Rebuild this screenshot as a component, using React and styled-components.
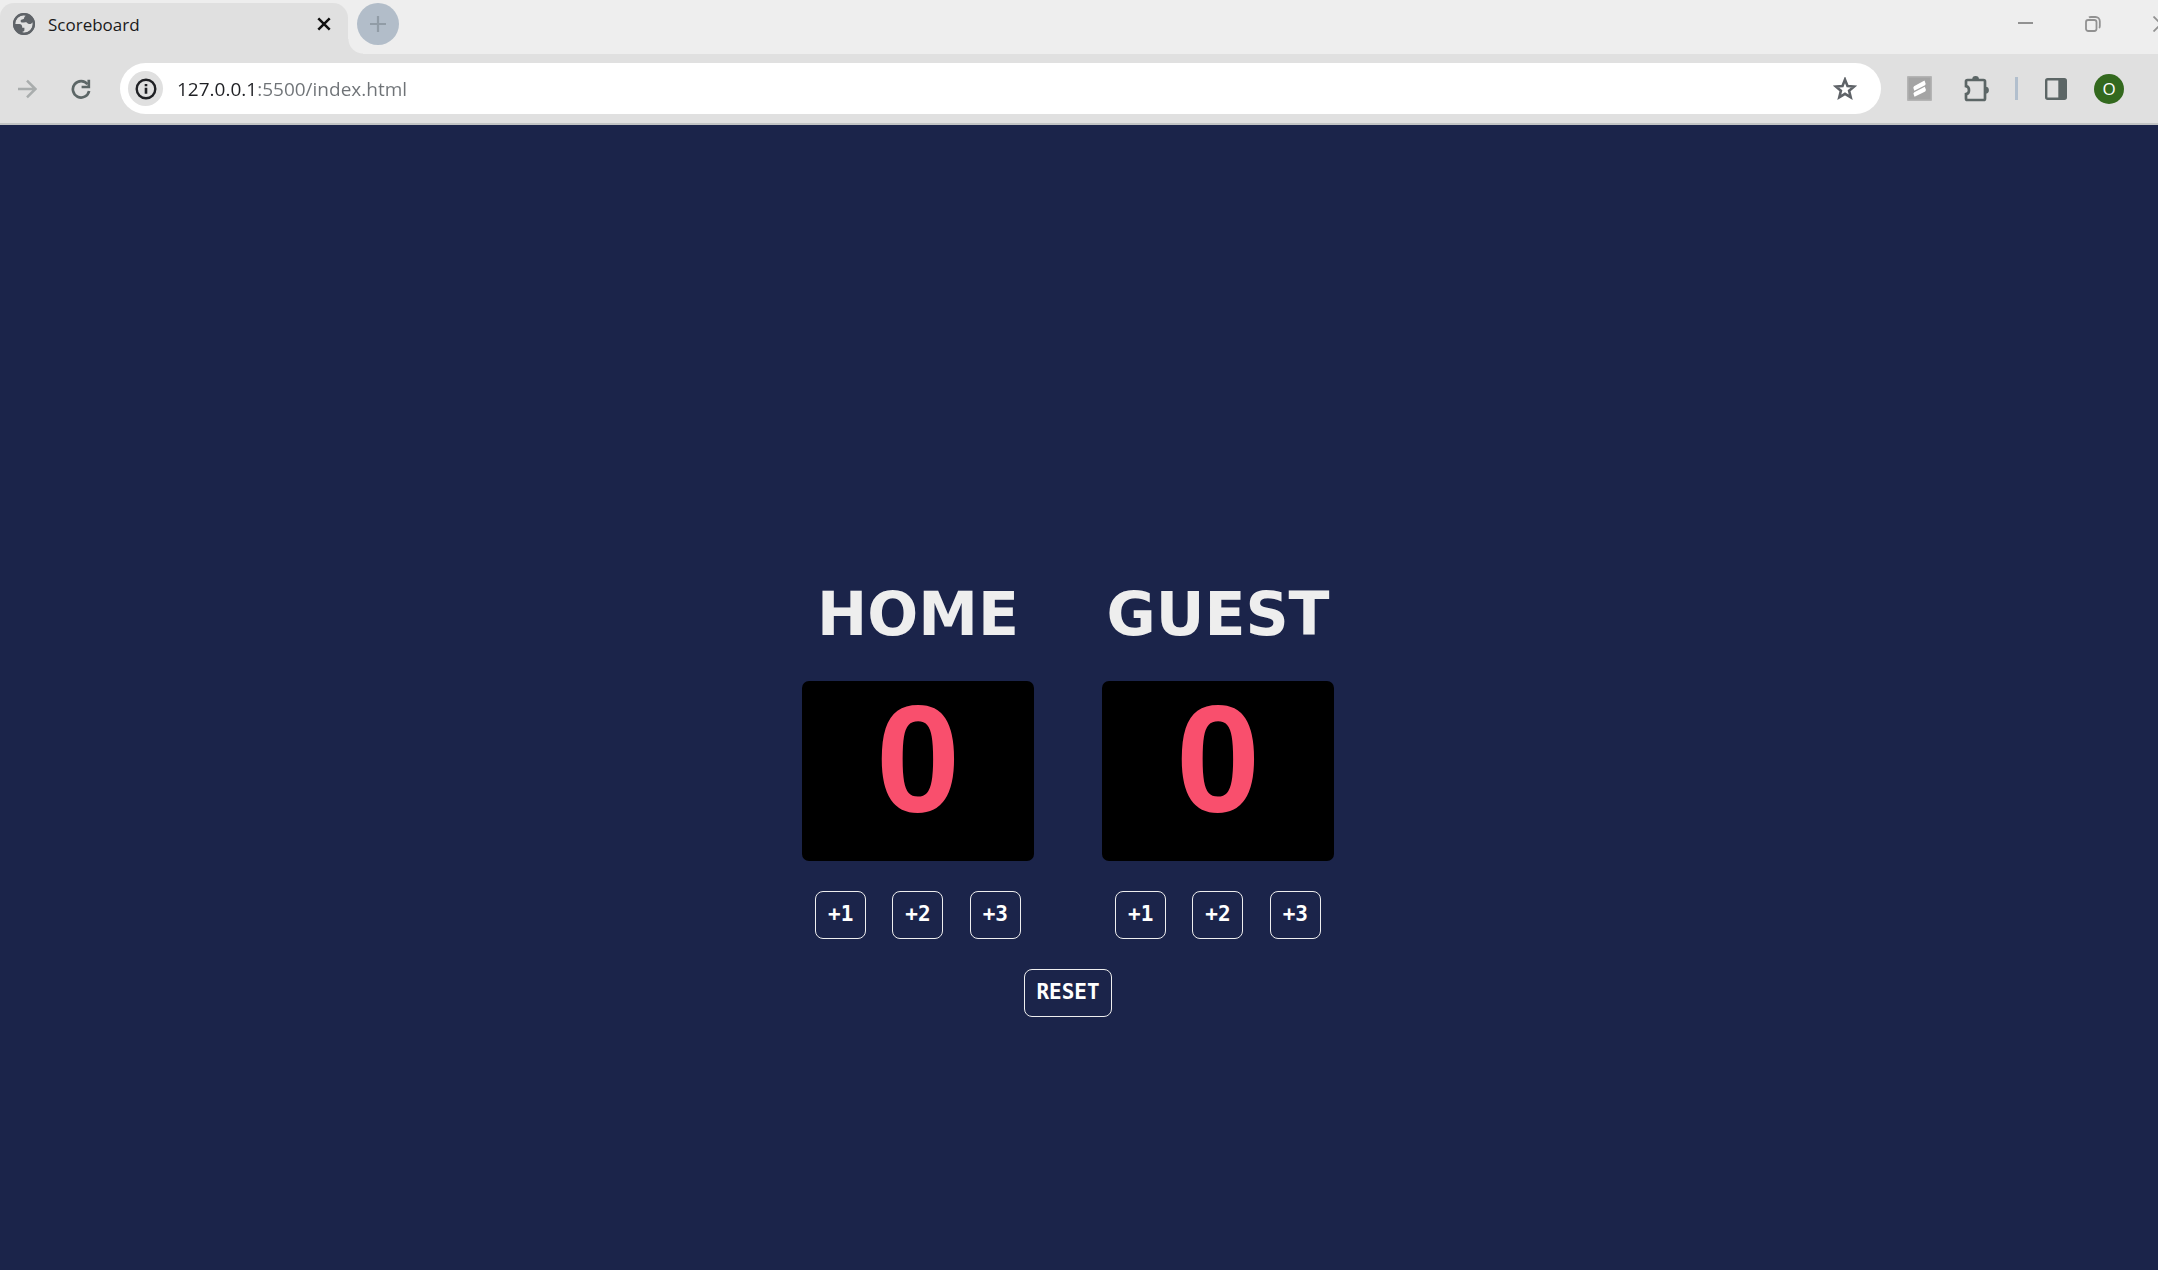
import React, { useState } from "react";
import styled, { createGlobalStyle } from "styled-components";

const GlobalStyle = createGlobalStyle`
  * { box-sizing: border-box; }
  body { margin: 0; overflow-x: hidden; background: #1b244a; }
  button, input { font: inherit; }
`;

const uiFont = `"Open Sans", "Noto Sans", sans-serif`;

const Window = styled.div`
  min-height: 100vh;
  display: flex;
  flex-direction: column;
  font-family: ${uiFont};
`;

const TabStrip = styled.header`
  height: 54px;
  padding-top: 3px;
  display: flex;
  overflow: hidden;
  background: #eeeeee;
`;

const Tab = styled.div`
  width: 348px;
  padding: 0 16px 9px 13px;
  display: flex;
  align-items: center;
  gap: 13px;
  background: #e0e0e0;
  border-radius: 14px 15px 0 0;
`;

const TabTitle = styled.span`
  flex: 1;
  padding-top: 2px;
  font-size: 17px;
  line-height: 24px;
  color: #1a1a1a;
`;

const TabFoot = styled.div`
  align-self: flex-end;
  width: 15px;
  height: 15px;
  margin-right: -6px;
  background: radial-gradient(circle at 100% 0, transparent 14px, #e0e0e0 15px);
`;

const PlainButton = styled.button`
  display: flex;
  align-items: center;
  justify-content: center;
  flex: none;
  width: ${(p) => p.$size}px;
  height: ${(p) => p.$size}px;
  padding: 0;
  border: 0;
  border-radius: 50%;
  background: ${(p) => p.$fill || "transparent"};
  color: ${(p) => p.$ink || "#5c6666"};
  cursor: pointer;
`;

const WindowControls = styled.div`
  margin-left: auto;
  margin-right: -21px;
  height: 42px;
  display: flex;
  align-items: center;
  gap: 32px;
`;

const Toolbar = styled.nav`
  height: 71px;
  padding: 8px 34px 8px 9px;
  display: flex;
  align-items: center;
  gap: 18px;
  background: #e0e0e0;
  border-bottom: 2px solid #c2c4c4;
`;

const AddressBar = styled.div`
  flex: 1;
  height: 51px;
  margin-left: 3px;
  padding: 0 16px 0 8px;
  display: flex;
  align-items: center;
  gap: 14px;
  border-radius: 26px;
  background: #ffffff;
`;

const AddressInput = styled.input`
  flex: 1;
  min-width: 0;
  height: 32px;
  padding: 0;
  border: 0;
  outline: 0;
  font-size: 19px;
  line-height: 32px;
  color: transparent;
  caret-color: #1f2024;
  background: linear-gradient(90deg, #1f2024 81px, #6f7377 81px);
  background-clip: text;
  -webkit-background-clip: text;
`;

const Divider = styled.span`
  width: 3px;
  height: 23px;
  background: #b2bfcd;
`;

const Avatar = styled(PlainButton)`
  font-size: 17px;
  line-height: 30px;
`;

const Page = styled.main`
  flex: 1;
  padding: 447px 22px 0 0;
  display: flex;
  flex-direction: column;
  align-items: center;
  gap: 30px;
  background: #1b244a;
`;

const Teams = styled.div`
  display: flex;
  gap: 68px;
`;

const Team = styled.section`
  width: 232px;
  display: flex;
  flex-direction: column;
  align-items: center;
`;

const TeamName = styled.h1`
  margin: 0 0 25px;
  font-family: "DejaVu Sans", Verdana, sans-serif;
  font-size: 60px;
  font-weight: 700;
  line-height: 84px;
  color: #eeeeee;
`;

const Score = styled.output`
  width: 100%;
  height: 180px;
  margin-bottom: 30px;
  padding-bottom: 24px;
  display: flex;
  align-items: center;
  justify-content: center;
  border-radius: 7px;
  background: #000000;
  font-family: "Liberation Sans", Arial, sans-serif;
  font-size: 152px;
  font-weight: 700;
  line-height: 156px;
  color: #f94f6d;
`;

const Points = styled.div`
  width: 100%;
  display: flex;
  justify-content: space-around;
`;

const LedButton = styled.button`
  width: ${(p) => (p.$wide ? 88 : 51)}px;
  height: 48px;
  padding: 0 0 2px;
  border: 1px solid #eeeeee;
  border-radius: 8px;
  background: transparent;
  font-family: "DejaVu Sans Mono", monospace;
  font-size: 21px;
  font-weight: 700;
  line-height: 24px;
  color: #ffffff;
  cursor: pointer;
`;

const Icon = ({ size = 24, box = 24, children, ...rest }) => (
  <svg width={size} height={size} viewBox={`0 0 ${box} ${box}`} fill="none" stroke="currentColor" aria-hidden="true" {...rest}>
    {children}
  </svg>
);

const GlobeIcon = () => (
  <Icon size={22} box={22} stroke="none">
    <circle cx="11" cy="11" r="11" fill="#5f6368" />
    <path
      fill="#e0e0e0"
      d="M10 2.2C5.500 2.600 2.200 6.500 2.200 11h4.300c1.500 0 2.700 1.200 2.700 2.700v1.100h2.200v2.200c0 1-.9 1.700-1.900 1.700v.9c5.300.8 10.200-3.300 10.300-8.600 0-.7-.1-1.400-.3-2-.8 1.800-1.900 2.300-3.300 2-1.500-.3-1.900-1.500-3.200-1.800-1.500-.3-2.400.5-4.200.2-1-.2-1.500-1.300-1-2.200.5-1 1.900-.7 2.800-1.300.8-.6.300-1.700 1.200-2.500.4-.4.900-.5 1.200-.9A9 9 0 0 0 10 2.200Z"
    />
    <circle cx="11" cy="11" r="9.900" stroke="#5f6368" strokeWidth="2.200" />
  </Icon>
);

const CloseIcon = () => (
  <Icon size={14} box={14} strokeWidth="2.500"><path d="M1.300 1.300l11.400 11.400M12.700 1.300l-11.400 11.400" /></Icon>
);

const PlusIcon = () => (
  <Icon size={16} box={16} strokeWidth="2.200"><path d="M8 0v16M0 8h16" /></Icon>
);

const MinimizeIcon = () => (
  <Icon size={16} box={16} strokeWidth="2"><path d="M1 7h15" /></Icon>
);

const RestoreIcon = () => (
  <Icon size={16} box={16} strokeWidth="1.800">
    <rect x="1" y="4" width="10.500" height="11" rx="2.200" />
    <path d="M4 1.500C4.600 1 5.200 1 6 1h4.500a4.300 4.300 0 0 1 4.300 4.300V10c0 .9-.2 1.500-.7 2" />
  </Icon>
);

const WindowCloseIcon = () => (
  <Icon size={16} box={16} strokeWidth="1.800"><path d="M.5.5l15 15M15.500.5l-15 15" /></Icon>
);

const ForwardIcon = () => (
  <Icon size={20} box={20} strokeWidth="2.500"><path d="M1 10h17M10 1.600l8.400 8.400-8.400 8.400" /></Icon>
);

const ReloadIcon = () => (
  <Icon size={20} box={20}>
    <path d="M16.600 5.300A8.200 8.200 0 1 0 18.100 12" strokeWidth="2.700" />
    <path d="M17.800.8v7.200h-7.200" strokeWidth="2.700" />
  </Icon>
);

const InfoIcon = () => (
  <Icon size={22} box={22}>
    <circle cx="11" cy="11" r="9.300" strokeWidth="2.400" />
    <path d="M11 9.800v6M11 6v2.300" strokeWidth="2.600" />
  </Icon>
);

const StarIcon = () => (
  <Icon size={24} box={24} strokeWidth="2.600">
    <path d="M12 2.600l2.500 6.400 6.700.5-5.100 4.300 1.600 6.500-5.700-3.500-5.700 3.500 1.600-6.500-5.100-4.300 6.700-.5z" />
  </Icon>
);

const ScribbleIcon = () => (
  <Icon size={25} box={25} stroke="none">
    <rect width="25" height="25" rx="1" fill="#b5b5b5" />
    <rect x="1.500" y="1.500" width="22" height="22" fill="#a4a4a4" />
    <path fill="#ffffff" d="M7 10.200L17.500 4.500l1.200 3.500-.7 1.300L7.300 14.700l-1-2.900zM7.300 16.300l10.500-5.600 1.200 3.200-.8 1.500L7.500 20.800l-1.100-3.200z" />
  </Icon>
);

const PuzzleIcon = () => (
  <Icon size={26} box={26}>
    <path
      d="M3.500 4.500H19.500a1.500 1.500 0 0 1 1.500 1.500v17a1.500 1.500 0 0 1-1.500 1.500H3.500a1.500 1.500 0 0 1-1.500-1.500v-4.300c4-.7 4-7.300 0-8V6a1.500 1.500 0 0 1 1.500-1.500Z"
      strokeWidth="2.700"
      transform="translate(0 -.5)"
    />
    <path d="M8.200 3.500a3.400 3.400 0 0 1 6.800 0zM21.500 10.800a3.400 3.400 0 0 1 0 6.800z" fill="currentColor" stroke="none" />
  </Icon>
);

const PanelIcon = () => (
  <Icon size={22} box={22}>
    <rect x="1.200" y="1.200" width="19.600" height="19.600" rx="1.500" strokeWidth="2.400" />
    <path d="M13.300 1h7.700v20h-7.700z" fill="currentColor" stroke="none" />
  </Icon>
);

function TeamPanel({ name, score, onAdd }) {
  return (
    <Team>
      <TeamName>{name}</TeamName>
      <Score aria-label={`${name} score`}>{score}</Score>
      <Points>
        {[1, 2, 3].map((n) => (
          <LedButton key={n} type="button" onClick={() => onAdd(n)}>+{n}</LedButton>
        ))}
      </Points>
    </Team>
  );
}

export default function App() {
  const [home, setHome] = useState(0);
  const [guest, setGuest] = useState(0);
  const reset = () => {
    setHome(0);
    setGuest(0);
  };

  return (
    <>
      <GlobalStyle />
      <Window>
        <TabStrip>
          <Tab>
            <GlobeIcon />
            <TabTitle>Scoreboard</TabTitle>
            <PlainButton $size={16} $ink="#111111" aria-label="Close tab"><CloseIcon /></PlainButton>
          </Tab>
          <TabFoot />
          <PlainButton $size={42} $fill="#b2bdc9" $ink="#919ca6" aria-label="New tab"><PlusIcon /></PlainButton>
          <WindowControls>
            <PlainButton $size={36} $ink="#919191" aria-label="Minimize"><MinimizeIcon /></PlainButton>
            <PlainButton $size={36} $ink="#919191" aria-label="Restore"><RestoreIcon /></PlainButton>
            <PlainButton $size={36} $ink="#919191" aria-label="Close window"><WindowCloseIcon /></PlainButton>
          </WindowControls>
        </TabStrip>
        <Toolbar>
          <PlainButton $size={36} $ink="#a9adad" aria-label="Forward"><ForwardIcon /></PlainButton>
          <PlainButton $size={36} aria-label="Reload"><ReloadIcon /></PlainButton>
          <AddressBar>
            <PlainButton $size={35} $fill="#e0e0e0" $ink="#1f2024" aria-label="Site information"><InfoIcon /></PlainButton>
            <AddressInput aria-label="Address" defaultValue="127.0.0.1:5500/index.html" />
            <PlainButton $size={40} $ink="#5f6368" aria-label="Bookmark"><StarIcon /></PlainButton>
          </AddressBar>
          <PlainButton $size={40} aria-label="Extension"><ScribbleIcon /></PlainButton>
          <PlainButton $size={40} aria-label="Extensions"><PuzzleIcon /></PlainButton>
          <Divider />
          <PlainButton $size={40} aria-label="Side panel"><PanelIcon /></PlainButton>
          <Avatar $size={30} $fill="#33691e" $ink="#ffffff" aria-label="Profile O">O</Avatar>
        </Toolbar>
        <Page>
          <Teams>
            <TeamPanel name="HOME" score={home} onAdd={(n) => setHome(home + n)} />
            <TeamPanel name="GUEST" score={guest} onAdd={(n) => setGuest(guest + n)} />
          </Teams>
          <LedButton $wide type="button" onClick={reset}>RESET</LedButton>
        </Page>
      </Window>
    </>
  );
}
